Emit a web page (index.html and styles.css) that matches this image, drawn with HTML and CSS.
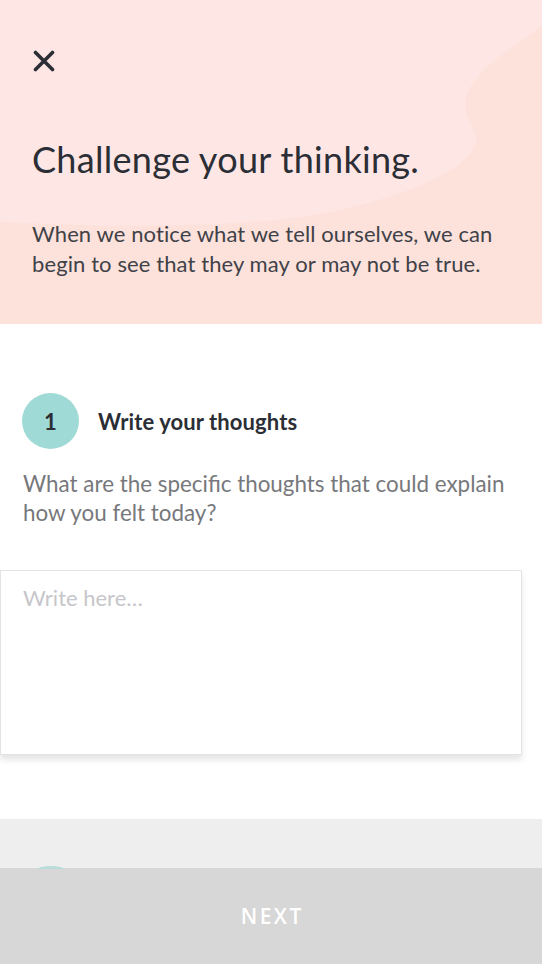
FILE: index.html
```html
<!DOCTYPE html>
<html>
<head>
<meta charset="utf-8">
<link rel="stylesheet" href="styles.css">
</head>
<body>
<div class="screen">
  <header class="hero">
    <svg class="blob" width="542" height="324" viewBox="0 0 542 324" aria-hidden="true">
      <path d="M0,0 H542 V25 C520,45 482,62 468,92 C458,115 478,128 476,142 C468,172 400,198 330,212 C250,228 120,228 0,222 Z" fill="#fee6e4"/>
    </svg>
    <button class="close" aria-label="Close">
      <svg width="22" height="22" viewBox="0 0 22 22"><path d="M2.5 2.5 L19.5 19.5 M19.5 2.5 L2.5 19.5" stroke="#2b2e35" stroke-width="3.6" stroke-linecap="round"/></svg>
    </button>
    <h1 class="title">Challenge your thinking.</h1>
    <p class="lead">When we notice what we tell ourselves, we can begin to see that they may or may not be true.</p>
  </header>
  <section class="step">
    <div class="step-head">
      <div class="badge">1</div>
      <div class="step-title">Write your thoughts</div>
    </div>
    <p class="question">What are the specific thoughts that could explain how you felt today?</p>
  </section>
  <div class="entry">
    <div class="placeholder">Write here…</div>
  </div>
  <div class="next-card"><div class="peek"></div></div>
  <footer class="next-bar">NEXT</footer>
</div>
</body>
</html>
```
FILE: styles.css
```css
* { box-sizing: border-box; }
html, body { margin: 0; padding: 0; }
body { background: #fff; font-family: Lato, "Open Sans", sans-serif; width: 542px; height: 964px; overflow: hidden; }
.screen { position: relative; width: 542px; height: 964px; display: flex; flex-direction: column; }
.hero { position: relative; flex: none; height: 324px; background: #fde1db; padding: 50px 32px 0 32px; overflow: hidden; }
.blob { position: absolute; left: 0; top: 0; display: block; }
.close { position: relative; border: 0; background: none; padding: 0; margin: 0 0 0 1px; width: 22px; height: 22px; display: block; cursor: pointer; }
.close svg { display: block; }
.title { position: relative; margin: 64px 0 0 0; font-size: 36px; font-weight: 400; color: #2b2e35; line-height: 46px; letter-spacing: 0.3px; }
.lead { position: relative; margin: 37px 0 0 0; font-size: 22px; line-height: 30px; color: #3f4248; letter-spacing: 0.1px; }
.step { flex: none; padding: 69px 23px 0 22px; }
.step-head { display: flex; align-items: center; gap: 19px; }
.badge { width: 57px; height: 56px; border-radius: 50%; background: #a0dad6; color: #2b2e35; display: flex; align-items: center; justify-content: center; font-size: 22px; font-weight: 700; }
.step-title { font-size: 22px; color: #2b2e35; font-weight: 700; letter-spacing: 0.1px; }
.question { margin: 20px 0 0 1px; font-size: 22.4px; line-height: 29px; color: #77787c; }
.entry { flex: none; margin: 43px 20px 0 0; height: 185px; border: 1px solid #e4e4e4; background: #fff; box-shadow: 0 5px 6px rgba(0,0,0,0.10); padding: 13px 22px; }
.placeholder { font-size: 22px; color: #c6c6ca; }
.next-card { flex: none; position: relative; margin-top: 64px; height: 49px; background: #eeeeee; }
.peek { position: absolute; left: 38px; bottom: -1px; width: 26px; height: 3px; background: #b7dcd9; border-radius: 50% 50% 0 0 / 100% 100% 0 0; }
.next-bar { flex: 1; background: #d7d7d7; color: #fff; display: flex; align-items: center; justify-content: center; font-size: 21px; font-weight: 600; letter-spacing: 2.5px; padding-left: 2.5px; font-family: "Open Sans", sans-serif; }
```
